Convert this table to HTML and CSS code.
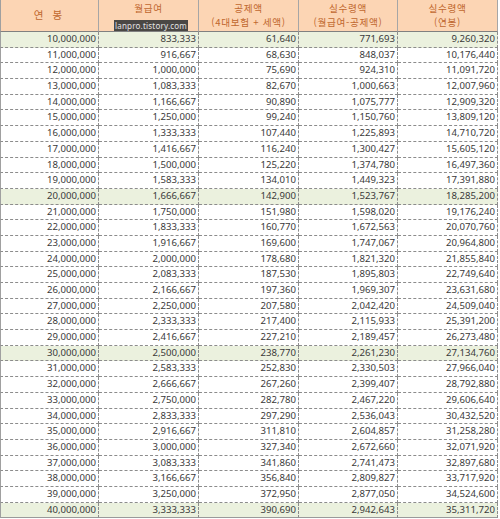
FILE: index.html
```html
<!DOCTYPE html>
<html lang="ko">
<head>
<meta charset="utf-8">
<title>연봉 실수령액</title>
<link rel="stylesheet" href="styles.css">
</head>
<body>
<div class="sheet">
  <div class="row head">
    <div class="hc single">연 봉</div>
    <div class="hc"><span>월급여</span><span class="spacer"></span><span class="mark"><span class="mark-text">lanpro.tistory.com</span></span></div>
    <div class="hc"><span>공제액</span><span>(4대보험 + 세액)</span></div>
    <div class="hc"><span>실수령액</span><span>(월급여-공제액)</span></div>
    <div class="hc"><span>실수령액</span><span>(연봉)</span></div>
  </div>
  <div class="row hl"><div>10,000,000</div><div>833,333</div><div>61,640</div><div>771,693</div><div>9,260,320</div></div>
  <div class="row"><div>11,000,000</div><div>916,667</div><div>68,630</div><div>848,037</div><div>10,176,440</div></div>
  <div class="row"><div>12,000,000</div><div>1,000,000</div><div>75,690</div><div>924,310</div><div>11,091,720</div></div>
  <div class="row"><div>13,000,000</div><div>1,083,333</div><div>82,670</div><div>1,000,663</div><div>12,007,960</div></div>
  <div class="row"><div>14,000,000</div><div>1,166,667</div><div>90,890</div><div>1,075,777</div><div>12,909,320</div></div>
  <div class="row"><div>15,000,000</div><div>1,250,000</div><div>99,240</div><div>1,150,760</div><div>13,809,120</div></div>
  <div class="row"><div>16,000,000</div><div>1,333,333</div><div>107,440</div><div>1,225,893</div><div>14,710,720</div></div>
  <div class="row"><div>17,000,000</div><div>1,416,667</div><div>116,240</div><div>1,300,427</div><div>15,605,120</div></div>
  <div class="row"><div>18,000,000</div><div>1,500,000</div><div>125,220</div><div>1,374,780</div><div>16,497,360</div></div>
  <div class="row"><div>19,000,000</div><div>1,583,333</div><div>134,010</div><div>1,449,323</div><div>17,391,880</div></div>
  <div class="row hl"><div>20,000,000</div><div>1,666,667</div><div>142,900</div><div>1,523,767</div><div>18,285,200</div></div>
  <div class="row"><div>21,000,000</div><div>1,750,000</div><div>151,980</div><div>1,598,020</div><div>19,176,240</div></div>
  <div class="row"><div>22,000,000</div><div>1,833,333</div><div>160,770</div><div>1,672,563</div><div>20,070,760</div></div>
  <div class="row"><div>23,000,000</div><div>1,916,667</div><div>169,600</div><div>1,747,067</div><div>20,964,800</div></div>
  <div class="row"><div>24,000,000</div><div>2,000,000</div><div>178,680</div><div>1,821,320</div><div>21,855,840</div></div>
  <div class="row"><div>25,000,000</div><div>2,083,333</div><div>187,530</div><div>1,895,803</div><div>22,749,640</div></div>
  <div class="row"><div>26,000,000</div><div>2,166,667</div><div>197,360</div><div>1,969,307</div><div>23,631,680</div></div>
  <div class="row"><div>27,000,000</div><div>2,250,000</div><div>207,580</div><div>2,042,420</div><div>24,509,040</div></div>
  <div class="row"><div>28,000,000</div><div>2,333,333</div><div>217,400</div><div>2,115,933</div><div>25,391,200</div></div>
  <div class="row"><div>29,000,000</div><div>2,416,667</div><div>227,210</div><div>2,189,457</div><div>26,273,480</div></div>
  <div class="row hl"><div>30,000,000</div><div>2,500,000</div><div>238,770</div><div>2,261,230</div><div>27,134,760</div></div>
  <div class="row"><div>31,000,000</div><div>2,583,333</div><div>252,830</div><div>2,330,503</div><div>27,966,040</div></div>
  <div class="row"><div>32,000,000</div><div>2,666,667</div><div>267,260</div><div>2,399,407</div><div>28,792,880</div></div>
  <div class="row"><div>33,000,000</div><div>2,750,000</div><div>282,780</div><div>2,467,220</div><div>29,606,640</div></div>
  <div class="row"><div>34,000,000</div><div>2,833,333</div><div>297,290</div><div>2,536,043</div><div>30,432,520</div></div>
  <div class="row"><div>35,000,000</div><div>2,916,667</div><div>311,810</div><div>2,604,857</div><div>31,258,280</div></div>
  <div class="row"><div>36,000,000</div><div>3,000,000</div><div>327,340</div><div>2,672,660</div><div>32,071,920</div></div>
  <div class="row"><div>37,000,000</div><div>3,083,333</div><div>341,860</div><div>2,741,473</div><div>32,897,680</div></div>
  <div class="row"><div>38,000,000</div><div>3,166,667</div><div>356,840</div><div>2,809,827</div><div>33,717,920</div></div>
  <div class="row"><div>39,000,000</div><div>3,250,000</div><div>372,950</div><div>2,877,050</div><div>34,524,600</div></div>
  <div class="row hl last"><div>40,000,000</div><div>3,333,333</div><div>390,690</div><div>2,942,643</div><div>35,311,720</div></div>
</div>
</body>
</html>
```

FILE: styles.css
```css
html, body {
  margin: 0;
  padding: 0;
  background: #ffffff;
}
.sheet {
  display: flex;
  flex-direction: column;
  width: 498px;
  font-family: "Noto Sans", "Noto Sans CJK KR", sans-serif;
  font-size: 9.6px;
  color: #3a3a3a;
}
.row {
  display: grid;
  grid-template-columns: 99px 100px 100px 99px 100px;
  height: 15.7px;
}
.row > div {
  box-sizing: border-box;
  border-right: 1px dashed #8c8c8c;
  border-bottom: 1px dashed #8c8c8c;
  text-align: right;
  padding-right: 2px;
  line-height: 14.7px;
  white-space: nowrap;
  overflow: hidden;
}
.row > div:first-child {
  border-left: 1px solid #a0a0a0;
}
.row.hl {
  background: #ebf1de;
}
.row.last > div {
  border-bottom: 1px solid #9a9a9a;
}
.row.head {
  height: 32px;
  background: #fcd5b4;
}
.row.head > .hc {
  position: relative;
  display: flex;
  flex-direction: column;
  align-items: center;
  justify-content: center;
  text-align: center;
  padding: 0 0 1px 0;
  font-family: "Noto Sans CJK KR", sans-serif;
  font-size: 9.6px;
  letter-spacing: 0.7px;
  line-height: 14px;
  color: #c0672e;
  border-right: 1px solid #a6a6a6;
  border-bottom: 1px solid #808080;
  overflow: visible;
}
.row.head > .hc > span {
  display: block;
  height: 14px;
}
.row.head > .hc.single {
  font-size: 10.5px;
  letter-spacing: 3px;
}
.row.head > .hc > .mark {
  position: absolute;
  left: 15px;
  top: 20px;
  width: 74px;
  height: 11px;
  background: #4a4744;
  display: flex;
  justify-content: center;
  align-items: center;
}
.mark-text {
  display: inline-block;
  color: #e4e4e4;
  font-family: "Noto Sans", sans-serif;
  font-size: 8px;
  line-height: 11px;
  letter-spacing: 0.2px;
  white-space: nowrap;
}
```
